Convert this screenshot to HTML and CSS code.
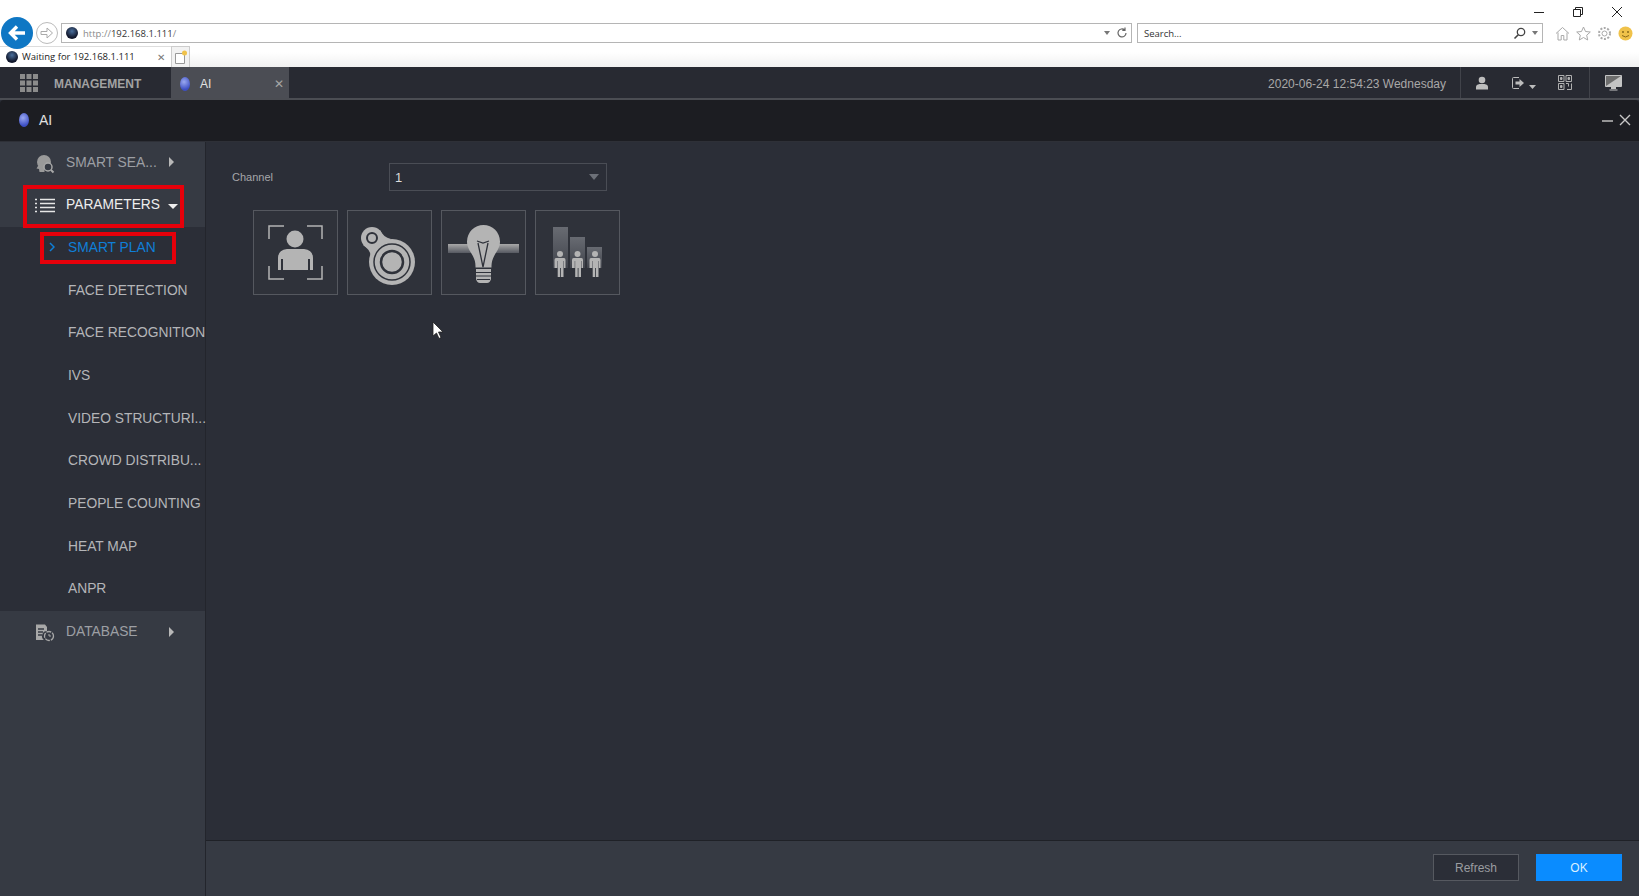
FILE: index.html
```html
<!DOCTYPE html>
<html lang="en">
<head>
  <meta charset="UTF-8" />
  <title>AI</title>
  <link rel="stylesheet" href="styles.css">
</head>
<body>

  <!-- browser chrome -->
  <div class="browser">
    <div class="win-controls">
      <svg width="12" height="12" viewBox="0 0 12 12"><path d="M1 6.500h10" stroke="#222" fill="none"/></svg>
      <svg width="12" height="12" viewBox="0 0 12 12"><path d="M1.500 3.500h7v7h-7zM3.500 3.500v-2h7v7h-2" stroke="#222" fill="none"/></svg>
      <svg width="12" height="12" viewBox="0 0 12 12"><path d="M1 1l10 10M11 1L1 11" stroke="#222" fill="none"/></svg>
    </div>
    <div class="nav-row">
      <div class="back-btn">
        <svg width="22" height="22" viewBox="0 0 22 22"><path d="M19 11H5M11 4.500L4.500 11l6.500 6.500" stroke="#fff" stroke-width="3.400" fill="none"/></svg>
      </div>
      <div class="fwd-btn">
        <svg width="14" height="14" viewBox="0 0 14 14"><path d="M1 5.500h6V2l5.500 5L7 12V8.500H1z" stroke="#aaa" fill="none"/></svg>
      </div>
      <div class="addr-box">
        <span class="globe"></span>
        <span class="url"><span class="dim">http://</span>192.168.1.111<span class="dim">/</span></span>
        <span class="addr-tools">
          <svg width="8" height="6" viewBox="0 0 8 6"><path d="M1 1h6L4 5z" fill="#777"/></svg>
          <svg width="12" height="12" viewBox="0 0 12 12"><path d="M10 6a4 4 0 1 1-1.300-3M9 .5V3.300H6.300" stroke="#666" stroke-width="1.200" fill="none"/></svg>
        </span>
      </div>
      <div class="search-box">
        <span class="search-text">Search...</span>
        <span class="addr-tools">
          <svg width="13" height="13" viewBox="0 0 13 13"><circle cx="8" cy="5" r="3.700" stroke="#444" stroke-width="1.300" fill="none"/><path d="M5.300 7.700L1.500 11.500" stroke="#444" stroke-width="1.600"/></svg>
          <svg width="8" height="6" viewBox="0 0 8 6"><path d="M1 1h6L4 5z" fill="#777"/></svg>
        </span>
      </div>
      <div class="browser-icons">
        <svg width="15" height="15" viewBox="0 0 15 15"><path d="M1 7.500L7.500 1.500 14 7.500M3 6.500V14h3.200V9.500h2.600V14H12V6.500" stroke="#a9a9a9" fill="none"/></svg>
        <svg width="15" height="15" viewBox="0 0 15 15"><path d="M7.500 1l2 4.500 4.800.5-3.600 3.200 1 4.800-4.200-2.500L3.300 14l1-4.800L.7 6l4.800-.5z" stroke="#a9a9a9" fill="none"/></svg>
        <svg width="15" height="15" viewBox="0 0 15 15"><circle cx="7.500" cy="7.500" r="2.500" stroke="#a9a9a9" fill="none"/><circle cx="7.500" cy="7.500" r="5.500" stroke="#a9a9a9" stroke-dasharray="2 1.500" stroke-width="2" fill="none"/></svg>
        <svg width="15" height="15" viewBox="0 0 15 15"><circle cx="7.500" cy="7.500" r="7" fill="#f0c24a"/><circle cx="5" cy="6" r="1" fill="#8a6a1a"/><circle cx="10" cy="6" r="1" fill="#8a6a1a"/><path d="M4 9.500q3.500 3 7 0" stroke="#8a6a1a" fill="none"/></svg>
      </div>
    </div>
    <div class="tab-row">
      <div class="ie-tab">
        <span class="globe"></span>
        <span class="ie-tab-title">Waiting for 192.168.1.111</span>
        <span class="ie-tab-close">✕</span>
      </div>
      <div class="new-tab">
        <svg width="15" height="15" viewBox="0 0 15 15"><path d="M2.500 3.500h9v10h-9z" fill="#fff" stroke="#999"/><circle cx="11.500" cy="3" r="2.500" fill="#f0c24a"/></svg>
      </div>
    </div>
  </div>

  <!-- app top bar -->
  <div class="topbar">
    <div class="mgmt">
      <svg class="grid-icon" width="18" height="18" viewBox="0 0 18 18" fill="#8b8b8b">
        <rect x="0" y="0" width="5" height="5"/><rect x="6.500" y="0" width="5" height="5"/><rect x="13" y="0" width="5" height="5"/>
        <rect x="0" y="6.500" width="5" height="5"/><rect x="6.500" y="6.500" width="5" height="5"/><rect x="13" y="6.500" width="5" height="5"/>
        <rect x="0" y="13" width="5" height="5"/><rect x="6.500" y="13" width="5" height="5"/><rect x="13" y="13" width="5" height="5"/>
      </svg>
      <span>MANAGEMENT</span>
    </div>
    <div class="app-tab">
      <span class="ball"></span>
      <span class="app-tab-name">AI</span>
      <span class="app-tab-close">✕</span>
    </div>
    <div class="topbar-right">
      <span class="clock">2020-06-24 12:54:23 Wednesday</span>
      <div class="top-icons">
        <svg width="14" height="14" viewBox="0 0 14 14" fill="#bdbdbd"><circle cx="7" cy="4" r="3.300"/><path d="M1 13.500v-2.500q0-2.500 3.500-3h5q3.500.5 3.500 3v2.500z"/></svg>
        <span class="logout">
          <svg width="14" height="14" viewBox="0 0 14 14"><path d="M8 1.500H2.500a1 1 0 0 0-1 1v9a1 1 0 0 0 1 1H8" stroke="#bdbdbd" fill="none"/><path d="M4.500 5.500h4V3l4.500 4-4.500 4V8.500h-4z" fill="#bdbdbd"/></svg>
          <svg class="logout-caret" width="7" height="4" viewBox="0 0 7 4"><path d="M0 0h7L3.500 4z" fill="#bdbdbd"/></svg>
        </span>
        <svg width="14" height="15" viewBox="0 0 14 15" stroke="#b0b0b0" fill="none"><path d="M.5.500h5.500v6H.5zM8 .500h5.500v6H8zM.5 8.500h5.500v6H.5zM8 8.500h2.500v3M13.500 8.500v6H9"/><path d="M2.500 2.500h1.500v2H2.500zM10 2.500h1.500v2H10zM2.500 10.500h1.500v2H2.500z" fill="#b0b0b0"/></svg>
      </div>
      <div class="monitor">
        <svg width="17" height="16" viewBox="0 0 17 16"><path d="M.5.500h16v11H.5z" fill="#6d6d6d" stroke="#c4c4c4"/><path d="M1 11L16 1v10z" fill="#c4c4c4"/><path d="M6 12h5v2H6zM4.500 14.500h8v1h-8z" fill="#c4c4c4"/></svg>
      </div>
    </div>
  </div>

  <!-- window title -->
  <div class="titlebar">
    <span class="ball"></span>
    <span class="title-name">AI</span>
    <div class="title-btns">
      <svg width="11" height="11" viewBox="0 0 11 11"><path d="M0 7h11" stroke="#bdbdbd" stroke-width="1.500"/></svg>
      <svg width="12" height="12" viewBox="0 0 12 12"><path d="M1 1l10 10M11 1L1 11" stroke="#c8c8c8" stroke-width="1.400"/></svg>
    </div>
  </div>

  <div class="main">
    <div class="sidebar">
      <div class="menu-row">
        <svg class="menu-icon" width="20" height="20" viewBox="0 0 20 20"><circle cx="9" cy="8" r="7" fill="#9a9a9a"/><path d="M3 12l-1.500 2.500 2.500.5.500 3h5V12z" fill="#9a9a9a"/><circle cx="13" cy="13" r="4" fill="#363a43" stroke="#a8a8a8" stroke-width="1.500"/><path d="M16 16l2.500 2.500" stroke="#a8a8a8" stroke-width="2"/></svg>
        <span class="menu-text">SMART SEA...</span>
        <span class="caret-right"></span>
      </div>
      <div class="menu-row is-open">
        <svg class="menu-icon" width="20" height="16" viewBox="0 0 20 16"><path d="M0 1.500h2M5 1.500h15M0 5.500h2M5 5.500h15M0 9.500h2M5 9.500h15M0 13.500h2M5 13.500h15" stroke="#e6e6e6" stroke-width="1.600"/></svg>
        <span class="menu-text">PARAMETERS</span>
        <span class="caret-down"></span>
      </div>
      <div class="submenu">
        <div class="sub-row is-active">
          <svg class="chev" width="6" height="10" viewBox="0 0 6 10"><path d="M1 1l4 4-4 4" stroke="#0f7fd8" stroke-width="1.500" fill="none"/></svg>
          SMART PLAN
        </div>
        <div class="sub-row">FACE DETECTION</div>
        <div class="sub-row">FACE RECOGNITION</div>
        <div class="sub-row">IVS</div>
        <div class="sub-row">VIDEO STRUCTURI...</div>
        <div class="sub-row">CROWD DISTRIBU...</div>
        <div class="sub-row">PEOPLE COUNTING</div>
        <div class="sub-row">HEAT MAP</div>
        <div class="sub-row">ANPR</div>
      </div>
      <div class="menu-row">
        <svg class="menu-icon" width="20" height="18" viewBox="0 0 20 18"><path d="M1 .500h9l2 2.500v4a5 5 0 0 0-3 9H1z" fill="#a8a8a8"/><path d="M3 5h6M3 8h5M3 11h4" stroke="#363a43" stroke-width="1.300"/><circle cx="14" cy="12" r="4.500" fill="none" stroke="#a8a8a8" stroke-width="1.300" stroke-dasharray="5 1"/><path d="M14 10v2h2" stroke="#a8a8a8" fill="none"/></svg>
        <span class="menu-text">DATABASE</span>
        <span class="caret-right"></span>
      </div>
      <div class="callout callout-params"></div>
      <div class="callout callout-plan"></div>
    </div>

    <div class="content">
      <div class="pane">
        <div class="channel-row">
          <label class="channel-label">Channel</label>
          <div class="select">
            <span>1</span>
            <svg width="10" height="6" viewBox="0 0 10 6"><path d="M0 0h10L5 6z" fill="#6c7078"/></svg>
          </div>
        </div>
        <div class="tiles">
          <div class="tile">
            <svg width="85" height="85" viewBox="0 0 85 85">
              <path d="M16 29V16h15M54 16h15v13M16 56v13h15M54 69h15V56" stroke="#b4b4b4" stroke-width="1.500" fill="none"/>
              <circle cx="42" cy="29" r="8.500" fill="#b4b4b4"/>
              <path d="M25 60V48q0-8 9-9h17q9 1 9 9v12h-3V49h-2v11H30V49h-2v11z" fill="#b4b4b4"/>
            </svg>
          </div>
          <div class="tile">
            <svg width="85" height="85" viewBox="0 0 85 85" fill="none">
              <circle cx="25" cy="28" r="11" fill="#b4b4b4"/>
              <circle cx="45" cy="52" r="23" fill="#b4b4b4"/>
              <path d="M33 20Q36 27 44 29L24 48Q24 40 16 35z" fill="#b4b4b4"/>
              <circle cx="25" cy="28" r="5" stroke="#2f323a" stroke-width="2"/>
              <circle cx="45" cy="52" r="18" stroke="#2f323a" stroke-width="1.500"/>
              <circle cx="45" cy="52" r="11" stroke="#2f323a" stroke-width="2.500"/>
            </svg>
          </div>
          <div class="tile">
            <svg width="85" height="85" viewBox="0 0 85 85">
              <defs>
                <linearGradient id="barFade" x1="0" y1="0" x2="0" y2="1">
                  <stop offset="0" stop-color="#a8a8a8"/>
                  <stop offset="1" stop-color="#565961"/>
                </linearGradient>
                <linearGradient id="colFade" x1="0" y1="0" x2="0" y2="1">
                  <stop offset="0" stop-color="#686b72"/>
                  <stop offset="1" stop-color="#41444c"/>
                </linearGradient>
              </defs>
              <rect x="7" y="34" width="71" height="9" fill="url(#barFade)"/>
              <path d="M42.500 15a16.500 16.500 0 0 0-16.500 16.500c0 7 4 10 7 17 1.500 3.500 1.500 7 1.500 9h16c0-2 0-5.500 1.500-9 3-7 7-10 7-17A16.500 16.500 0 0 0 42.500 15z" fill="#b4b4b4"/>
              <path d="M36 31l6 2 6-2M37 33l5 24 5-24" stroke="#2f323a" stroke-width="1.300" fill="none"/>
              <path d="M35 59h15v10q-1 4-4 4h-7q-3 0-4-4z" fill="#b4b4b4"/>
              <path d="M35 62.500h15M35 66h15M36 69.500h13" stroke="#2f323a" stroke-width="1.200"/>
            </svg>
          </div>
          <div class="tile">
            <svg width="85" height="85" viewBox="0 0 85 85">
              <rect x="18" y="17" width="15" height="41" fill="url(#colFade)"/>
              <rect x="35" y="27" width="15" height="31" fill="url(#colFade)"/>
              <rect x="52" y="37" width="15" height="21" fill="url(#colFade)"/>
              <g fill="#b4b4b4">
                <circle cx="25" cy="44" r="3"/>
                <path d="M21 48h8q1.500 0 1.500 2v8h-1.500v-7h-.5v16h-2.500v-9h-.8v9h-2.500V51h-.5v7H19.500v-8q0-2 1.500-2z"/>
                <circle cx="42.500" cy="44" r="3"/>
                <path d="M38.500 48h8q1.500 0 1.500 2v8h-1.500v-7h-.5v16h-2.500v-9h-.8v9h-2.500V51h-.5v7H37v-8q0-2 1.500-2z"/>
                <circle cx="60" cy="44" r="3"/>
                <path d="M56 48h8q1.500 0 1.500 2v8h-1.500v-7h-.5v16h-2.500v-9h-.8v9h-2.500V51h-.5v7H54.500v-8q0-2 1.500-2z"/>
              </g>
            </svg>
          </div>
        </div>
      </div>
      <div class="footer">
        <button class="btn btn-plain">Refresh</button>
        <button class="btn btn-ok">OK</button>
      </div>
    </div>
  </div>

  <svg class="cursor" width="12" height="18" viewBox="0 0 12 18"><path d="M1 1v14l3.500-3 2.500 5.500 2-1-2.500-5.500H11z" fill="#fff" stroke="#222" stroke-width=".8"/></svg>

</body>
</html>
```
FILE: styles.css
```css
html, body {
  height: 100%;
}

body {
  margin: 0;
  padding: 0;
  overflow: hidden;
  display: flex;
  flex-direction: column;
  background: #2b2e37;
  font-family: "Liberation Sans", Arial, sans-serif;
  position: relative;
}

/* browser */
.browser {
  height: 67px;
  flex: none;
  background: linear-gradient(#fff 78%, #f1f1f1);
  font-family: "Open Sans", "Noto Sans", sans-serif;
  position: relative;
}

.win-controls {
  position: absolute;
  top: 6px;
  right: 16px;
  display: flex;
  gap: 27px;
}

.nav-row {
  display: flex;
  align-items: center;
  height: 24px;
  padding-top: 21px;
}

.back-btn {
  width: 32px;
  height: 32px;
  margin-left: 1px;
  border-radius: 50%;
  background: #0f77c4;
  display: flex;
  align-items: center;
  justify-content: center;
  flex: none;
  position: relative;
  z-index: 2;
}

.fwd-btn {
  width: 20px;
  height: 20px;
  margin-left: 3px;
  border: 1px solid #bbb;
  border-radius: 50%;
  display: flex;
  align-items: center;
  justify-content: center;
  flex: none;
}

.addr-box,
.search-box {
  height: 18px;
  border: 1px solid #b5b5b5;
  display: flex;
  align-items: center;
  background: #fff;
  font-size: 9.5px;
  color: #333;
}

.addr-box {
  width: 1065px;
  margin-left: 3px;
  padding-left: 4px;
  flex: none;
}

.search-box {
  width: 398px;
  margin-left: 5px;
  padding-left: 6px;
  flex: none;
}

.globe {
  display: inline-block;
  width: 12px;
  height: 12px;
  border-radius: 50%;
  background: radial-gradient(circle at 50% 35%, #4a6f9c, #12182c 65%);
  flex: none;
}

.url {
  margin-left: 5px;
}

.dim {
  color: #8a8a8a;
}

.addr-tools {
  margin-left: auto;
  margin-right: 3px;
  display: flex;
  align-items: center;
  gap: 5px;
}

.browser-icons {
  display: flex;
  gap: 6px;
  margin-left: 12px;
  flex: none;
}

.tab-row {
  display: flex;
  height: 21px;
  margin-top: 1px;
}

.ie-tab {
  width: 171px;
  height: 21px;
  padding: 0 0 1px 6px;
  display: flex;
  align-items: center;
  box-sizing: border-box;
  background: #fff;
  font-size: 9.5px;
  color: #222;
  border-top: 1px solid #ddd;
}

.ie-tab-title {
  margin-left: 4px;
}

.ie-tab-close {
  margin-left: auto;
  margin-right: 6px;
  font-size: 10px;
  color: #777;
}

.new-tab {
  width: 19px;
  height: 21px;
  box-sizing: border-box;
  border: 1px solid #ccc;
  border-bottom: 0;
  background: #f2f2f2;
  display: flex;
  align-items: center;
  justify-content: center;
}

/* app top bar */
.topbar {
  height: 31px;
  flex: none;
  display: flex;
  background: #282a32;
  border-bottom: 2px solid #4b4d53;
  color: #b9b9b9;
}

.mgmt {
  width: 171px;
  display: flex;
  align-items: center;
  padding: 2px 0 0 20px;
  box-sizing: border-box;
  font-size: 12px;
  font-weight: bold;
  color: #a2a2a2;
}

.grid-icon {
  margin: -2px 16px 0 0;
}

.app-tab {
  width: 118px;
  display: flex;
  align-items: center;
  padding: 2px 0 0 9px;
  box-sizing: border-box;
  background: #4b4d54;
}

.app-tab-name {
  margin-left: 10px;
  font-size: 12px;
  color: #e2e2e2;
}

.app-tab-close {
  margin-left: auto;
  margin-right: 5px;
  font-size: 12px;
  color: #a5a5a5;
}

.ball {
  display: inline-block;
  width: 10px;
  height: 14px;
  border-radius: 50%;
  background: radial-gradient(circle at 40% 35%, #9aa8f0, #3d4fc4 70%);
  flex: none;
}

.topbar-right {
  margin-left: auto;
  display: flex;
  align-items: center;
  height: 100%;
}

.clock {
  font-size: 12px;
  color: #a8a8a8;
  margin: 2px 14px 0 0;
}

.top-icons {
  height: 100%;
  width: 130px;
  box-sizing: border-box;
  padding: 0 17px 0 14px;
  display: flex;
  align-items: center;
  justify-content: space-between;
  border-left: 1px solid #41434a;
  border-right: 1px solid #41434a;
}

.logout {
  display: flex;
  align-items: flex-end;
  gap: 4px;
}

.logout-caret {
  margin-bottom: 1px;
}

.monitor {
  width: 49px;
  box-sizing: border-box;
  display: flex;
  justify-content: center;
  padding-right: 3px;
}

/* window title */
.titlebar {
  height: 42px;
  flex: none;
  box-sizing: border-box;
  display: flex;
  align-items: center;
  padding: 0 8px 2px 19px;
  background: #1c1d22;
  border-bottom: 1px solid #2e3037;
  border-top-left-radius: 4px;
  border-top-right-radius: 4px;
}

.title-name {
  margin-left: 10px;
  font-size: 14px;
  color: #e0e0e0;
}

.title-btns {
  margin-left: auto;
  display: flex;
  align-items: center;
  gap: 6px;
}

.main {
  flex: 1;
  display: flex;
  min-height: 0;
}

/* sidebar */
.sidebar {
  width: 206px;
  flex: none;
  box-sizing: border-box;
  background: #363a43;
  border-right: 1px solid #23252c;
  position: relative;
  font-size: 13.8px;
}

.menu-row {
  height: 42.67px;
  box-sizing: border-box;
  padding-bottom: 2px;
  display: flex;
  align-items: center;
  color: #9d9fa4;
}

.menu-row.is-open {
  color: #eee;
}

.menu-icon {
  flex: none;
  margin: 3px 0 0 35px;
}

.menu-text {
  margin-left: 11px;
  width: 102px;
  white-space: nowrap;
}

.caret-right {
  width: 0;
  height: 0;
  margin-left: 1px;
  border-left: 5px solid #b8b8b8;
  border-top: 5px solid transparent;
  border-bottom: 5px solid transparent;
}

.caret-down {
  width: 0;
  height: 0;
  margin: 3px 0 0 0;
  border-top: 5px solid #eee;
  border-left: 5px solid transparent;
  border-right: 5px solid transparent;
}

.submenu {
  background: #2b2e37;
}

.sub-row {
  height: 42.67px;
  box-sizing: border-box;
  padding: 0 0 2px 68px;
  display: flex;
  align-items: center;
  color: #b4b5b8;
  white-space: nowrap;
  position: relative;
}

.sub-row.is-active {
  color: #0f7fd8;
}

.chev {
  position: absolute;
  left: 49px;
  top: 15px;
}

/* red annotation boxes over the menu */
.callout {
  position: absolute;
  border: 4px solid #e6000a;
  box-sizing: border-box;
}

.callout-params {
  left: 23px;
  top: 43px;
  width: 161px;
  height: 43px;
}

.callout-plan {
  left: 40px;
  top: 90px;
  width: 136px;
  height: 32px;
}

/* content */
.content {
  flex: 1;
  display: flex;
  flex-direction: column;
  min-width: 0;
}

.pane {
  flex: 1;
  padding: 21px 0 0 26px;
}

.channel-row {
  display: flex;
  align-items: center;
}

.channel-label {
  width: 157px;
  font-size: 11px;
  color: #a6a7aa;
}

.select {
  width: 218px;
  height: 28px;
  box-sizing: border-box;
  display: flex;
  align-items: center;
  justify-content: space-between;
  padding: 0 7px 0 5px;
  border: 1px solid #4a4d55;
  font-size: 13px;
  color: #dcdcdc;
}

.tiles {
  display: flex;
  gap: 9px;
  margin: 19px 0 0 21px;
}

.tile {
  width: 85px;
  height: 85px;
  background: #2f323a;
  outline: 1px solid #55585f;
  outline-offset: -1px;
}

.tile svg {
  display: block;
}

.footer {
  height: 56px;
  flex: none;
  box-sizing: border-box;
  display: flex;
  justify-content: flex-end;
  align-items: flex-start;
  gap: 17px;
  padding: 13px 17px 0 0;
  background: #363a43;
  border-top: 1px solid #1f2127;
}

.btn {
  width: 86px;
  height: 27px;
  padding: 0;
  font-family: inherit;
  font-size: 12px;
  box-sizing: border-box;
}

.btn-plain {
  background: #2b2e37;
  border: 1px solid #565960;
  color: #9b9da1;
}

.btn-ok {
  background: #0a8cff;
  border: 0;
  color: #d9f0ff;
}

.cursor {
  position: absolute;
  left: 432px;
  top: 321px;
}
```
